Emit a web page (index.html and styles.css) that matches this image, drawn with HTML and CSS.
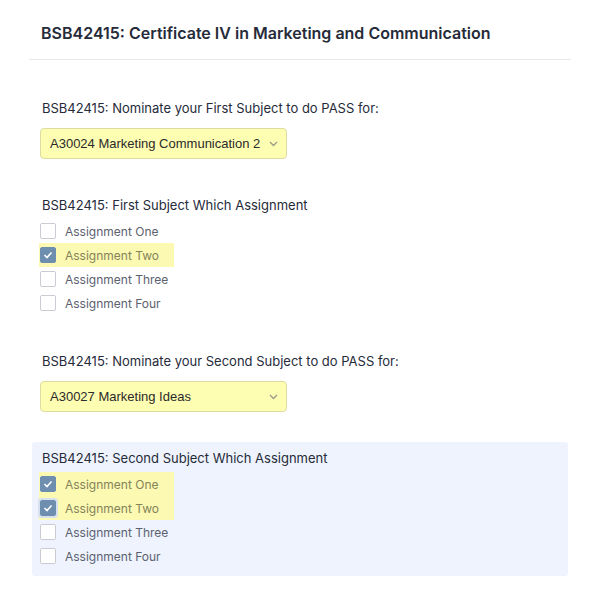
FILE: index.html
```html
<!DOCTYPE html>
<html>
<head>
    <title>BSB42415 Subject Nomination</title>
    <meta charset="UTF-8">
    <meta name="viewport" content="width=device-width, initial-scale=1.0">
    <link rel="stylesheet" href="styles.css">
</head>
<body>
    <div class="form-header">
        <h1>BSB42415: Certificate IV in Marketing and Communication</h1>
    </div>

    <ul class="form-list">
        <li class="form-line">
            <label class="form-label">BSB42415: Nominate your First Subject to do PASS for:</label>
            <div class="dropdown">
                <span>A30024 Marketing Communication 2</span>
                <svg class="chevron" width="9" height="6" viewBox="0 0 9 6"><path d="M1 1l3.5 3.5L8 1" fill="none" stroke="#9a9a8a" stroke-width="1.3"/></svg>
            </div>
        </li>

        <li class="form-line">
            <label class="form-label">BSB42415: First Subject Which Assignment</label>
            <div class="choices">
                <div class="choice"><span class="box"></span>Assignment One</div>
                <div class="hl-group">
                    <div class="choice checked"><span class="box"><svg width="10" height="8" viewBox="0 0 10 8"><path d="M1.5 4l2.5 2.5L8.5 1.5" fill="none" stroke="#fff" stroke-width="1.6"/></svg></span>Assignment Two</div>
                </div>
                <div class="choice"><span class="box"></span>Assignment Three</div>
                <div class="choice"><span class="box"></span>Assignment Four</div>
            </div>
        </li>

        <li class="form-line">
            <label class="form-label">BSB42415: Nominate your Second Subject to do PASS for:</label>
            <div class="dropdown">
                <span>A30027 Marketing Ideas</span>
                <svg class="chevron" width="9" height="6" viewBox="0 0 9 6"><path d="M1 1l3.5 3.5L8 1" fill="none" stroke="#9a9a8a" stroke-width="1.3"/></svg>
            </div>
        </li>

        <li class="form-line active">
            <label class="form-label">BSB42415: Second Subject Which Assignment</label>
            <div class="choices">
                <div class="hl-group">
                    <div class="choice checked"><span class="box"><svg width="10" height="8" viewBox="0 0 10 8"><path d="M1.5 4l2.5 2.5L8.5 1.5" fill="none" stroke="#fff" stroke-width="1.6"/></svg></span>Assignment One</div>
                    <div class="choice checked focused"><span class="box"><svg width="10" height="8" viewBox="0 0 10 8"><path d="M1.5 4l2.5 2.5L8.5 1.5" fill="none" stroke="#fff" stroke-width="1.6"/></svg></span>Assignment Two</div>
                </div>
                <div class="choice"><span class="box"></span>Assignment Three</div>
                <div class="choice"><span class="box"></span>Assignment Four</div>
            </div>
        </li>
    </ul>
</body>
</html>
```

FILE: styles.css
```css
body {
    margin: 0;
    background: #fff;
    font-family: 'Inter', 'Liberation Sans', sans-serif;
    color: #2c3345;
}
.form-header {
    margin: 0 29px;
    padding: 21px 12px 14px;
    border-bottom: 1px solid #e8e8e8;
}
.form-header h1 {
    margin: 0;
    font-size: 16px;
    line-height: 24px;
    font-weight: 600;
    color: #262b3a;
}
.form-list {
    list-style: none;
    margin: 0;
    padding: 32px 0 0;
}
.form-line {
    margin: 0 32px 22px;
    padding: 6px 10px 8px 8px;
    border-radius: 3px;
}
.form-line.active {
    background: #eef3fd;
}
.form-label {
    display: block;
    padding-left: 2px;
    font-size: 13px;
    line-height: 20px;
    color: #262b3a;
}
.dropdown {
    margin-top: 10px;
    width: 236px;
    height: 29px;
    display: flex;
    align-items: center;
    justify-content: space-between;
    padding-left: 9px;
    background: #fefeb3;
    border: 1px solid #dedba0;
    border-radius: 4px;
    font-family: 'Liberation Sans', Arial, sans-serif;
    font-size: 13px;
    color: #2a2a2a;
    white-space: nowrap;
}
.dropdown .chevron {
    margin-right: 8px;
}
.choices {
    margin-top: 4px;
}
.hl-group {
    display: inline-block;
    background: #fbf9b2;
    padding-right: 15px;
    margin-left: -1px;
    padding-left: 1px;
}
.choice {
    display: flex;
    align-items: center;
    height: 24px;
    font-size: 12px;
    color: #5c6170;
}
.hl-group .choice {
    color: #85835a;
}
.box {
    width: 14px;
    height: 14px;
    margin-right: 9px;
    border: 1px solid #c9ccd3;
    border-radius: 2px;
    background: #fff;
    display: flex;
    align-items: center;
    justify-content: center;
}
.choice.checked .box {
    background: #6e8eb0;
    border-color: #6e8eb0;
}
.choice.focused .box {
    box-shadow: 0 0 0 2px #d6e0ee;
}
```
